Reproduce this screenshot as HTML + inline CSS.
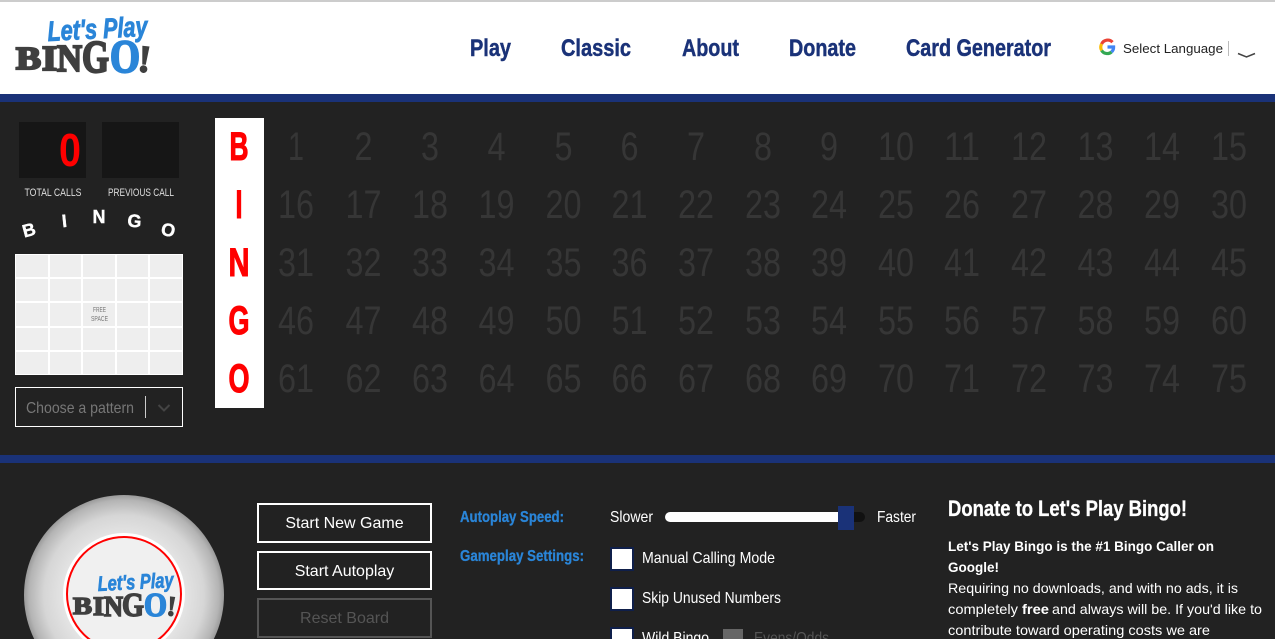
<!DOCTYPE html>
<html><head><meta charset="utf-8"><title>Let's Play Bingo</title>
<style>
html,body{margin:0;padding:0;width:1275px;height:639px;overflow:hidden;background:#222}
svg{display:block}
text{font-family:"Liberation Sans",sans-serif}
.n text{fill:#363636;font-size:40px;text-anchor:middle}
.nav{fill:#1a3278;stroke:#1a3278;stroke-width:.45px;font-size:24px;font-weight:700}
.c{fill:#fff;font-size:16px}
.b{fill:#f00;stroke:#f00;stroke-width:1.1px;font-size:40px;font-weight:700;text-anchor:middle}
.a{fill:#fff;stroke:#fff;stroke-width:.4px;font-size:18px;font-weight:700;text-anchor:middle}
.btn{fill:#fff;font-size:16px;text-anchor:middle}
.lab{fill:#2a85d8;stroke:#2a85d8;stroke-width:.3px;font-size:16px;font-weight:700}
.p{fill:#fff;font-size:14px}
.ser{font-family:"Liberation Serif",serif;font-weight:700}
.dk{fill:#3f3f3f;stroke:#3f3f3f}
.bl{fill:#2a85d8;stroke:#2a85d8}
</style></head><body>
<svg width="1275" height="639" viewBox="0 0 1275 639" xmlns="http://www.w3.org/2000/svg">
<defs>
<radialGradient id="ball" cx="50%" cy="50%" r="50%"><stop offset="0" stop-color="#f5f5f5"/><stop offset=".55" stop-color="#e8e8e8"/><stop offset=".8" stop-color="#d6d6d6"/><stop offset=".95" stop-color="#b4b4b4"/><stop offset="1" stop-color="#9a9a9a"/></radialGradient>
</defs>
<rect width="1275" height="639" fill="#222"/>
<rect width="1275" height="94" fill="#fff"/>
<rect width="1275" height="2" fill="#ccc"/>
<rect y="94" width="1275" height="8" fill="#1a3278"/>
<rect y="455" width="1275" height="8" fill="#1a3278"/>

<!-- logo -->
<g>
<text class="bl" transform="translate(48 41) rotate(-3)" font-size="28" font-weight="700" font-style="italic" stroke-width=".9" textLength="100" lengthAdjust="spacingAndGlyphs">Let's Play</text>
<text class="ser dk" x="16" y="69" font-size="32" stroke-width="2.2" textLength="25" lengthAdjust="spacingAndGlyphs">B</text>
<text class="ser dk" x="42" y="70" font-size="35" stroke-width="2.2" textLength="15" lengthAdjust="spacingAndGlyphs">I</text>
<text class="ser dk" x="57" y="71" font-size="38" stroke-width="2.2" textLength="25" lengthAdjust="spacingAndGlyphs">N</text>
<text class="ser dk" x="82" y="72" font-size="46" stroke-width="2.2" textLength="27" lengthAdjust="spacingAndGlyphs">G</text>
<text class="ser bl" x="110" y="72" font-size="47" stroke-width="2.2" textLength="30" lengthAdjust="spacingAndGlyphs">O</text>
<text class="ser dk" transform="translate(137 71) rotate(6)" font-size="38" stroke-width="1.5">!</text>
</g>

<!-- nav -->
<text class="nav" x="470" y="56" textLength="41" lengthAdjust="spacingAndGlyphs">Play</text>
<text class="nav" x="561" y="56" textLength="70" lengthAdjust="spacingAndGlyphs">Classic</text>
<text class="nav" x="682" y="56" textLength="57" lengthAdjust="spacingAndGlyphs">About</text>
<text class="nav" x="789" y="56" textLength="67" lengthAdjust="spacingAndGlyphs">Donate</text>
<text class="nav" x="906" y="56" textLength="145" lengthAdjust="spacingAndGlyphs">Card Generator</text>

<!-- google -->
<g fill="none" stroke-width="3.2">
<path d="M1112.5 42.200A6.600 6.600 0 0 0 1101.600 44" stroke="#ea4335"/>
<path d="M1101.600 44A6.600 6.600 0 0 0 1101.600 50.400" stroke="#fbbc05"/>
<path d="M1101.600 50.400A6.600 6.600 0 0 0 1111.500 52" stroke="#34a853"/>
<path d="M1111.500 52A6.600 6.600 0 0 0 1113.600 47H1107.500" stroke="#4285f4"/>
</g>
<text x="1123" y="53" font-size="13" fill="#222" textLength="100" lengthAdjust="spacingAndGlyphs">Select Language</text>
<rect x="1228" y="41" width="1" height="15" fill="#bbb"/>
<path d="M1238 53.500L1246.500 57L1255 53.500" fill="none" stroke="#444" stroke-width="1.5"/>

<!-- scoreboard -->
<rect x="19" y="122" width="67" height="56" fill="#161616"/>
<rect x="102" y="122" width="77" height="56" fill="#161616"/>
<text x="59" y="166" font-size="46" font-weight="700" fill="#f00" textLength="22" lengthAdjust="spacingAndGlyphs">0</text>
<text x="24.500" y="196" font-size="11" fill="#ddd" textLength="57" lengthAdjust="spacingAndGlyphs">TOTAL CALLS</text>
<text x="108" y="196" font-size="11" fill="#ddd" textLength="66" lengthAdjust="spacingAndGlyphs">PREVIOUS CALL</text>
<text class="a" transform="translate(30.500 236) rotate(-15)">B</text>
<text class="a" transform="translate(65 227) rotate(-6)" textLength="5" lengthAdjust="spacingAndGlyphs">I</text>
<text class="a" transform="translate(99 223)" textLength="13" lengthAdjust="spacingAndGlyphs">N</text>
<text class="a" transform="translate(134 227) rotate(5)">G</text>
<text class="a" transform="translate(167 236) rotate(12)">O</text>

<!-- pattern board -->
<rect x="15" y="254" width="168" height="121" fill="#fff"/>
<g fill="#eee">
<rect x="16" y="255" width="32" height="22"/><rect x="50" y="255" width="31" height="22"/><rect x="83" y="255" width="32" height="22"/><rect x="117" y="255" width="31" height="22"/><rect x="150" y="255" width="32" height="22"/>
<rect x="16" y="279" width="32" height="22"/><rect x="50" y="279" width="31" height="22"/><rect x="83" y="279" width="32" height="22"/><rect x="117" y="279" width="31" height="22"/><rect x="150" y="279" width="32" height="22"/>
<rect x="16" y="303" width="32" height="23"/><rect x="50" y="303" width="31" height="23"/><rect x="83" y="303" width="32" height="23"/><rect x="117" y="303" width="31" height="23"/><rect x="150" y="303" width="32" height="23"/>
<rect x="16" y="328" width="32" height="22"/><rect x="50" y="328" width="31" height="22"/><rect x="83" y="328" width="32" height="22"/><rect x="117" y="328" width="31" height="22"/><rect x="150" y="328" width="32" height="22"/>
<rect x="16" y="352" width="32" height="22"/><rect x="50" y="352" width="31" height="22"/><rect x="83" y="352" width="32" height="22"/><rect x="117" y="352" width="31" height="22"/><rect x="150" y="352" width="32" height="22"/>
</g>
<text x="93" y="312" font-size="7" fill="#777" textLength="13" lengthAdjust="spacingAndGlyphs">FREE</text>
<text x="91" y="321" font-size="7" fill="#777" textLength="17" lengthAdjust="spacingAndGlyphs">SPACE</text>

<!-- select -->
<rect x="15.500" y="387.500" width="167" height="39" fill="#222" stroke="#fff" stroke-width="1"/>
<text x="26" y="413" font-size="16" fill="#777" textLength="108" lengthAdjust="spacingAndGlyphs">Choose a pattern</text>
<rect x="145" y="396" width="1" height="22" fill="#ccc"/>
<path d="M158.500 405L164 410.500L169.500 405" fill="none" stroke="#444" stroke-width="2"/>

<!-- letters column -->
<rect x="215" y="118" width="49" height="290" fill="#fff"/>
<text class="b" x="239" y="160" textLength="19" lengthAdjust="spacingAndGlyphs">B</text>
<text class="b" x="239" y="218" textLength="7" lengthAdjust="spacingAndGlyphs">I</text>
<text class="b" x="239" y="276" textLength="21" lengthAdjust="spacingAndGlyphs">N</text>
<text class="b" x="239" y="334" textLength="21" lengthAdjust="spacingAndGlyphs">G</text>
<text class="b" x="239" y="392" textLength="21" lengthAdjust="spacingAndGlyphs">O</text>

<!-- numbers -->
<g class="n">
<text x="296" y="160" textLength="16" lengthAdjust="spacingAndGlyphs">1</text><text x="363.500" y="160" textLength="18" lengthAdjust="spacingAndGlyphs">2</text><text x="430" y="160" textLength="18" lengthAdjust="spacingAndGlyphs">3</text><text x="496.500" y="160" textLength="18" lengthAdjust="spacingAndGlyphs">4</text><text x="563.500" y="160" textLength="18" lengthAdjust="spacingAndGlyphs">5</text><text x="629.500" y="160" textLength="18" lengthAdjust="spacingAndGlyphs">6</text><text x="696" y="160" textLength="18" lengthAdjust="spacingAndGlyphs">7</text><text x="763" y="160" textLength="18" lengthAdjust="spacingAndGlyphs">8</text><text x="829" y="160" textLength="18" lengthAdjust="spacingAndGlyphs">9</text><text x="896" y="160" textLength="36" lengthAdjust="spacingAndGlyphs">10</text><text x="962" y="160" textLength="36" lengthAdjust="spacingAndGlyphs">11</text><text x="1029" y="160" textLength="36" lengthAdjust="spacingAndGlyphs">12</text><text x="1095.500" y="160" textLength="36" lengthAdjust="spacingAndGlyphs">13</text><text x="1162" y="160" textLength="36" lengthAdjust="spacingAndGlyphs">14</text><text x="1229" y="160" textLength="36" lengthAdjust="spacingAndGlyphs">15</text>
<text x="296" y="218" textLength="36" lengthAdjust="spacingAndGlyphs">16</text><text x="363.500" y="218" textLength="36" lengthAdjust="spacingAndGlyphs">17</text><text x="430" y="218" textLength="36" lengthAdjust="spacingAndGlyphs">18</text><text x="496.500" y="218" textLength="36" lengthAdjust="spacingAndGlyphs">19</text><text x="563.500" y="218" textLength="36" lengthAdjust="spacingAndGlyphs">20</text><text x="629.500" y="218" textLength="36" lengthAdjust="spacingAndGlyphs">21</text><text x="696" y="218" textLength="36" lengthAdjust="spacingAndGlyphs">22</text><text x="763" y="218" textLength="36" lengthAdjust="spacingAndGlyphs">23</text><text x="829" y="218" textLength="36" lengthAdjust="spacingAndGlyphs">24</text><text x="896" y="218" textLength="36" lengthAdjust="spacingAndGlyphs">25</text><text x="962" y="218" textLength="36" lengthAdjust="spacingAndGlyphs">26</text><text x="1029" y="218" textLength="36" lengthAdjust="spacingAndGlyphs">27</text><text x="1095.500" y="218" textLength="36" lengthAdjust="spacingAndGlyphs">28</text><text x="1162" y="218" textLength="36" lengthAdjust="spacingAndGlyphs">29</text><text x="1229" y="218" textLength="36" lengthAdjust="spacingAndGlyphs">30</text>
<text x="296" y="276" textLength="36" lengthAdjust="spacingAndGlyphs">31</text><text x="363.500" y="276" textLength="36" lengthAdjust="spacingAndGlyphs">32</text><text x="430" y="276" textLength="36" lengthAdjust="spacingAndGlyphs">33</text><text x="496.500" y="276" textLength="36" lengthAdjust="spacingAndGlyphs">34</text><text x="563.500" y="276" textLength="36" lengthAdjust="spacingAndGlyphs">35</text><text x="629.500" y="276" textLength="36" lengthAdjust="spacingAndGlyphs">36</text><text x="696" y="276" textLength="36" lengthAdjust="spacingAndGlyphs">37</text><text x="763" y="276" textLength="36" lengthAdjust="spacingAndGlyphs">38</text><text x="829" y="276" textLength="36" lengthAdjust="spacingAndGlyphs">39</text><text x="896" y="276" textLength="36" lengthAdjust="spacingAndGlyphs">40</text><text x="962" y="276" textLength="36" lengthAdjust="spacingAndGlyphs">41</text><text x="1029" y="276" textLength="36" lengthAdjust="spacingAndGlyphs">42</text><text x="1095.500" y="276" textLength="36" lengthAdjust="spacingAndGlyphs">43</text><text x="1162" y="276" textLength="36" lengthAdjust="spacingAndGlyphs">44</text><text x="1229" y="276" textLength="36" lengthAdjust="spacingAndGlyphs">45</text>
<text x="296" y="334" textLength="36" lengthAdjust="spacingAndGlyphs">46</text><text x="363.500" y="334" textLength="36" lengthAdjust="spacingAndGlyphs">47</text><text x="430" y="334" textLength="36" lengthAdjust="spacingAndGlyphs">48</text><text x="496.500" y="334" textLength="36" lengthAdjust="spacingAndGlyphs">49</text><text x="563.500" y="334" textLength="36" lengthAdjust="spacingAndGlyphs">50</text><text x="629.500" y="334" textLength="36" lengthAdjust="spacingAndGlyphs">51</text><text x="696" y="334" textLength="36" lengthAdjust="spacingAndGlyphs">52</text><text x="763" y="334" textLength="36" lengthAdjust="spacingAndGlyphs">53</text><text x="829" y="334" textLength="36" lengthAdjust="spacingAndGlyphs">54</text><text x="896" y="334" textLength="36" lengthAdjust="spacingAndGlyphs">55</text><text x="962" y="334" textLength="36" lengthAdjust="spacingAndGlyphs">56</text><text x="1029" y="334" textLength="36" lengthAdjust="spacingAndGlyphs">57</text><text x="1095.500" y="334" textLength="36" lengthAdjust="spacingAndGlyphs">58</text><text x="1162" y="334" textLength="36" lengthAdjust="spacingAndGlyphs">59</text><text x="1229" y="334" textLength="36" lengthAdjust="spacingAndGlyphs">60</text>
<text x="296" y="392" textLength="36" lengthAdjust="spacingAndGlyphs">61</text><text x="363.500" y="392" textLength="36" lengthAdjust="spacingAndGlyphs">62</text><text x="430" y="392" textLength="36" lengthAdjust="spacingAndGlyphs">63</text><text x="496.500" y="392" textLength="36" lengthAdjust="spacingAndGlyphs">64</text><text x="563.500" y="392" textLength="36" lengthAdjust="spacingAndGlyphs">65</text><text x="629.500" y="392" textLength="36" lengthAdjust="spacingAndGlyphs">66</text><text x="696" y="392" textLength="36" lengthAdjust="spacingAndGlyphs">67</text><text x="763" y="392" textLength="36" lengthAdjust="spacingAndGlyphs">68</text><text x="829" y="392" textLength="36" lengthAdjust="spacingAndGlyphs">69</text><text x="896" y="392" textLength="36" lengthAdjust="spacingAndGlyphs">70</text><text x="962" y="392" textLength="36" lengthAdjust="spacingAndGlyphs">71</text><text x="1029" y="392" textLength="36" lengthAdjust="spacingAndGlyphs">72</text><text x="1095.500" y="392" textLength="36" lengthAdjust="spacingAndGlyphs">73</text><text x="1162" y="392" textLength="36" lengthAdjust="spacingAndGlyphs">74</text><text x="1229" y="392" textLength="36" lengthAdjust="spacingAndGlyphs">75</text>
</g>

<!-- ball -->
<circle cx="124" cy="595" r="100" fill="url(#ball)"/>
<circle cx="124" cy="594" r="61" fill="#fff"/>
<circle cx="124" cy="594" r="57" fill="#f0f0f0" stroke="#f00" stroke-width="2"/>
<text class="bl" transform="translate(98 591) rotate(-3)" font-size="21" font-weight="700" font-style="italic" stroke-width=".7" textLength="76" lengthAdjust="spacingAndGlyphs">Let's Play</text>
<text class="ser dk" x="73" y="614" font-size="24" stroke-width="1.6" textLength="19" lengthAdjust="spacingAndGlyphs">B</text>
<text class="ser dk" x="93" y="615" font-size="26" stroke-width="1.6" textLength="11" lengthAdjust="spacingAndGlyphs">I</text>
<text class="ser dk" x="104" y="616" font-size="28" stroke-width="1.6" textLength="19" lengthAdjust="spacingAndGlyphs">N</text>
<text class="ser dk" x="122" y="616" font-size="34" stroke-width="1.6" textLength="22" lengthAdjust="spacingAndGlyphs">G</text>
<text class="ser bl" x="144" y="616" font-size="34" stroke-width="1.6" textLength="23" lengthAdjust="spacingAndGlyphs">O</text>
<text class="ser dk" transform="translate(166 615) rotate(6)" font-size="28" stroke-width="1.1">!</text>

<!-- buttons -->
<rect x="258" y="504" width="173" height="38" fill="none" stroke="#fff" stroke-width="2"/>
<text class="btn" x="344.500" y="528">Start New Game</text>
<rect x="258" y="552" width="173" height="37" fill="none" stroke="#fff" stroke-width="2"/>
<text class="btn" x="344.500" y="576">Start Autoplay</text>
<rect x="258" y="599" width="173" height="38" fill="none" stroke="#555" stroke-width="2"/>
<text class="btn" x="344.500" y="623" style="fill:#555">Reset Board</text>

<!-- settings -->
<text class="lab" x="460" y="522" textLength="104" lengthAdjust="spacingAndGlyphs">Autoplay Speed:</text>
<text class="lab" x="460" y="561" textLength="124" lengthAdjust="spacingAndGlyphs">Gameplay Settings:</text>
<text class="c" x="610" y="522" textLength="43" lengthAdjust="spacingAndGlyphs">Slower</text>
<rect x="665" y="512" width="200" height="10" rx="5" fill="#111"/>
<rect x="665" y="512" width="180" height="10" rx="5" fill="#fff"/>
<rect x="838" y="506" width="16" height="24" fill="#1a3278"/>
<text class="c" x="877" y="522" textLength="39" lengthAdjust="spacingAndGlyphs">Faster</text>

<rect x="611" y="548" width="22" height="22" fill="#fff" stroke="#0f1f4a" stroke-width="2"/>
<text class="c" x="642" y="563" textLength="133" lengthAdjust="spacingAndGlyphs">Manual Calling Mode</text>
<rect x="611" y="588" width="22" height="22" fill="#fff" stroke="#0f1f4a" stroke-width="2"/>
<text class="c" x="642" y="603" textLength="139" lengthAdjust="spacingAndGlyphs">Skip Unused Numbers</text>
<rect x="611" y="628" width="22" height="22" fill="#fff" stroke="#0f1f4a" stroke-width="2"/>
<text class="c" x="642" y="643" textLength="67" lengthAdjust="spacingAndGlyphs">Wild Bingo</text>
<rect x="723" y="629" width="20" height="20" fill="#666"/>
<text class="c" x="754" y="643" textLength="75" lengthAdjust="spacingAndGlyphs" style="fill:#555">Evens/Odds</text>

<!-- donate -->
<text x="948" y="516" font-size="22" font-weight="700" fill="#fff" stroke="#fff" stroke-width=".3" textLength="239" lengthAdjust="spacingAndGlyphs">Donate to Let's Play Bingo!</text>
<text class="p" x="948" y="551" font-weight="700" textLength="266" lengthAdjust="spacingAndGlyphs">Let's Play Bingo is the #1 Bingo Caller on</text>
<text class="p" x="948" y="572" font-weight="700" textLength="51" lengthAdjust="spacingAndGlyphs">Google!</text>
<text class="p" x="948" y="593" textLength="290" lengthAdjust="spacingAndGlyphs">Requiring no downloads, and with no ads, it is</text>
<text class="p" x="948" y="614" textLength="70" lengthAdjust="spacingAndGlyphs">completely</text>
<text class="p" x="1022" y="614" font-weight="700" textLength="27" lengthAdjust="spacingAndGlyphs">free</text>
<text class="p" x="1052" y="614" textLength="210" lengthAdjust="spacingAndGlyphs">and always will be. If you'd like to</text>
<text class="p" x="948" y="635" textLength="262" lengthAdjust="spacingAndGlyphs">contribute toward operating costs we are</text>
</svg>
</body></html>
